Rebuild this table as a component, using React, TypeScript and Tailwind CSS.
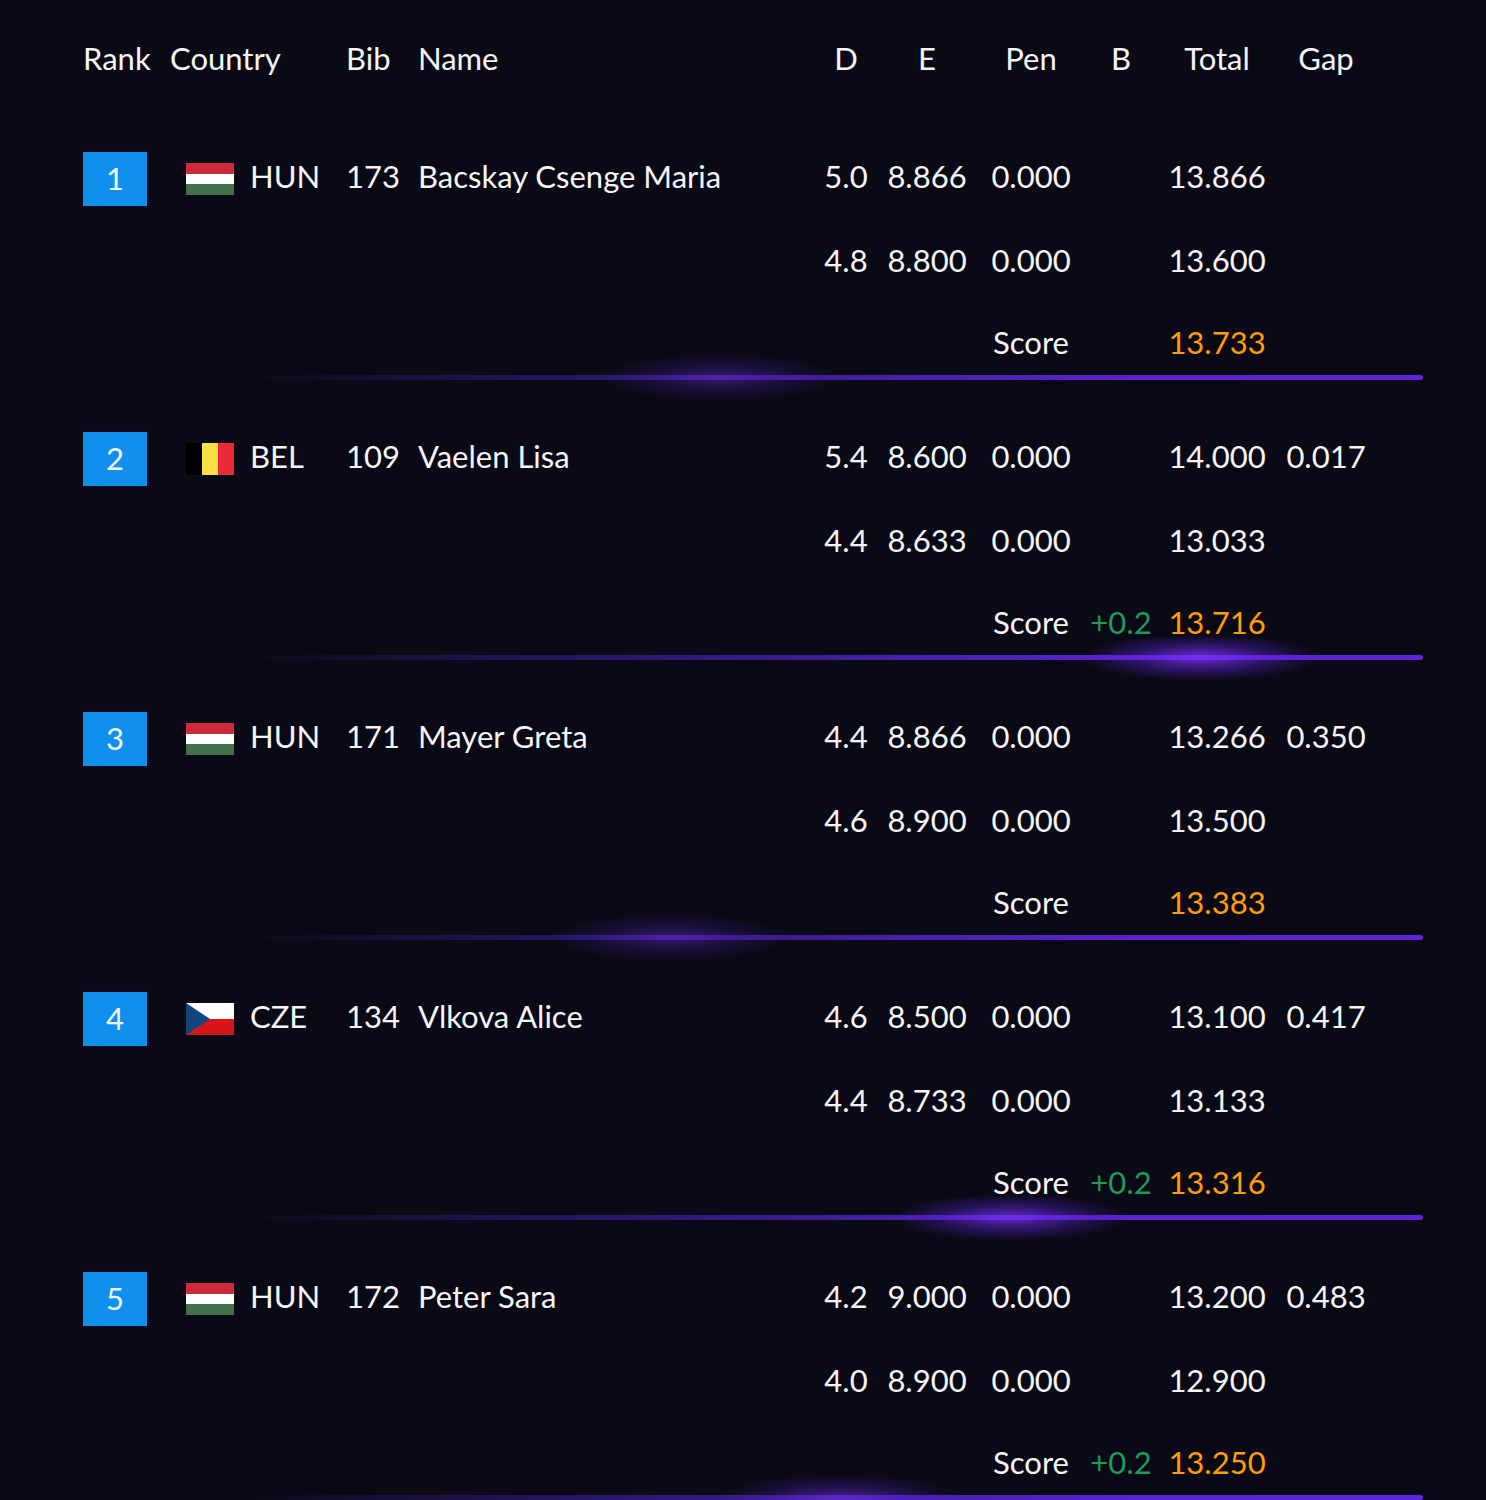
type Flag = "HUN" | "BEL" | "CZE";

interface Athlete {
  rank: number;
  country: Flag;
  bib: string;
  name: string;
  runs: { d: string; e: string; pen: string; total: string }[];
  gap?: string;
  bonus?: string;
  score: string;
  glowX: number;
  glowOpacity: number;
}

const athletes: Athlete[] = [
  {
    rank: 1,
    country: "HUN",
    bib: "173",
    name: "Bacskay Csenge Maria",
    runs: [
      { d: "5.0", e: "8.866", pen: "0.000", total: "13.866" },
      { d: "4.8", e: "8.800", pen: "0.000", total: "13.600" },
    ],
    score: "13.733",
    glowX: 480,
    glowOpacity: 0.45,
  },
  {
    rank: 2,
    country: "BEL",
    bib: "109",
    name: "Vaelen Lisa",
    runs: [
      { d: "5.4", e: "8.600", pen: "0.000", total: "14.000" },
      { d: "4.4", e: "8.633", pen: "0.000", total: "13.033" },
    ],
    gap: "0.017",
    bonus: "+0.2",
    score: "13.716",
    glowX: 960,
    glowOpacity: 1,
  },
  {
    rank: 3,
    country: "HUN",
    bib: "171",
    name: "Mayer Greta",
    runs: [
      { d: "4.4", e: "8.866", pen: "0.000", total: "13.266" },
      { d: "4.6", e: "8.900", pen: "0.000", total: "13.500" },
    ],
    gap: "0.350",
    score: "13.383",
    glowX: 430,
    glowOpacity: 0.45,
  },
  {
    rank: 4,
    country: "CZE",
    bib: "134",
    name: "Vlkova Alice",
    runs: [
      { d: "4.6", e: "8.500", pen: "0.000", total: "13.100" },
      { d: "4.4", e: "8.733", pen: "0.000", total: "13.133" },
    ],
    gap: "0.417",
    bonus: "+0.2",
    score: "13.316",
    glowX: 770,
    glowOpacity: 0.9,
  },
  {
    rank: 5,
    country: "HUN",
    bib: "172",
    name: "Peter Sara",
    runs: [
      { d: "4.2", e: "9.000", pen: "0.000", total: "13.200" },
      { d: "4.0", e: "8.900", pen: "0.000", total: "12.900" },
    ],
    gap: "0.483",
    bonus: "+0.2",
    score: "13.250",
    glowX: 600,
    glowOpacity: 0.6,
  },
];

const cols =
  "grid grid-cols-[87px_176px_72px_398px_60px_102px_106px_74px_118px_100px] items-center";

function FlagIcon({ code }: { code: Flag }) {
  if (code === "HUN") {
    return (
      <div className="flex h-[32px] w-[48px] flex-col">
        <div className="flex-1 bg-[#cd2a3e]" />
        <div className="flex-1 bg-white" />
        <div className="flex-1 bg-[#436f4d]" />
      </div>
    );
  }
  if (code === "BEL") {
    return (
      <div className="flex h-[32px] w-[48px]">
        <div className="flex-1 bg-black" />
        <div className="flex-1 bg-[#fae042]" />
        <div className="flex-1 bg-[#ed2939]" />
      </div>
    );
  }
  return (
    <svg width="48" height="32" viewBox="0 0 48 32">
      <rect width="48" height="16" fill="#ffffff" />
      <rect y="16" width="48" height="16" fill="#d7141a" />
      <polygon points="0,0 24,16 0,32" fill="#11457e" />
    </svg>
  );
}

function AthleteBlock({ a }: { a: Athlete }) {
  return (
    <div className="flex flex-col">
      <div className={`${cols} h-[54px]`}>
        <div className="flex h-[54px] w-[64px] items-center justify-center bg-[#1090ee] pb-[2px]">
          {a.rank}
        </div>
        <div className="flex items-center gap-[16px] pl-[16px]">
          <FlagIcon code={a.country} />
          <span className="pb-[5px]">{a.country}</span>
        </div>
        <div className="pb-[5px]">{a.bib}</div>
        <div className="pb-[5px]">{a.name}</div>
        <div className="pb-[5px] text-center">{a.runs[0].d}</div>
        <div className="pb-[5px] text-center">{a.runs[0].e}</div>
        <div className="pb-[5px] text-center">{a.runs[0].pen}</div>
        <div />
        <div className="pb-[5px] text-center">{a.runs[0].total}</div>
        <div className="pb-[5px] text-center">{a.gap ?? ""}</div>
      </div>

      <div className={`${cols} mt-[30px] h-[48px]`}>
        <div />
        <div />
        <div />
        <div />
        <div className="text-center">{a.runs[1].d}</div>
        <div className="text-center">{a.runs[1].e}</div>
        <div className="text-center">{a.runs[1].pen}</div>
        <div />
        <div className="text-center">{a.runs[1].total}</div>
        <div />
      </div>

      <div className={`${cols} mt-[34px] h-[48px]`}>
        <div />
        <div />
        <div />
        <div />
        <div />
        <div />
        <div className="text-center">Score</div>
        <div className="text-center text-[#1e9a5c]">{a.bonus ?? ""}</div>
        <div className="text-center text-[#ff9c0a]">{a.score}</div>
        <div />
      </div>

      {/* separator with glow */}
      <div className="relative ml-[157px] mt-[9px] mb-[52px] h-[5px] w-[1183px]">
        <div className="h-full w-full rounded-full bg-[linear-gradient(to_right,transparent,#2a1668_30%,#4a20b0_58%,#5b22d0_75%,#5e24d8)]" />
        <div
          className="absolute top-[-21px] h-[47px] w-[240px] rounded-full bg-[radial-gradient(ellipse_at_center,rgba(125,50,255,0.8)_0%,rgba(95,35,220,0.38)_40%,rgba(60,20,160,0)_70%)]"
          style={{ left: a.glowX - 120, opacity: a.glowOpacity }}
        />
      </div>
    </div>
  );
}

export default function App() {
  return (
    <div className="min-h-screen bg-[#0a0a16] pl-[83px] pt-[30px] font-['Lato','Liberation_Sans',sans-serif] text-[31px] leading-none text-[#f5f5f7]">
      <div className={`${cols} h-[58px] pb-[2px] text-[31px]`}>
        <div>Rank</div>
        <div>Country</div>
        <div>Bib</div>
        <div>Name</div>
        <div className="text-center">D</div>
        <div className="text-center">E</div>
        <div className="text-center">Pen</div>
        <div className="text-center">B</div>
        <div className="text-center">Total</div>
        <div className="text-center">Gap</div>
      </div>
      <div className="mt-[64px]">
        {athletes.map((a) => (
          <AthleteBlock key={a.rank} a={a} />
        ))}
      </div>
    </div>
  );
}
